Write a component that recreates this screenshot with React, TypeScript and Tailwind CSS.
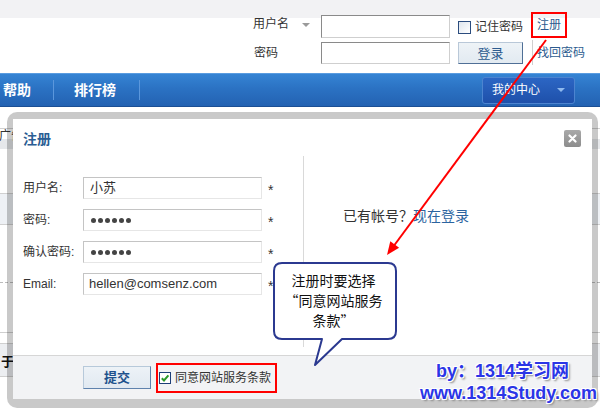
import React from "react";

// Login header + nav, with the register dialog opened on top of the page.
const font = "[font-family:'Liberation_Sans','Noto_Sans_CJK_SC',sans-serif]";

const Dots: React.FC = () => (
  <div className="flex items-center gap-[2px] pl-[7px]">
    {[0, 1, 2, 3, 4, 5].map((i) => (
      <span key={i} className="block w-[5px] h-[5px] rounded-full bg-[#444]" />
    ))}
  </div>
);

const Field: React.FC<{ label: string; children?: React.ReactNode }> = ({ label, children }) => (
  <div className="flex items-center h-[22px]">
    <span className="w-[60px]">{label}</span>
    <div className="w-[179px] h-[22px] flex items-center border border-[#c4c4c4] border-r-[#e6e6e6] border-b-[#e6e6e6] bg-white text-[13px] text-[#333]">
      {children}
    </div>
    <span className="ml-[6px] pt-[4px] text-[14px] leading-none">*</span>
  </div>
);

const App: React.FC = () => {
  return (
    <div className={`relative w-[600px] h-[408px] overflow-hidden bg-white text-[12px] text-[#333] ${font}`}>
      {/* top login bar */}
      <header className="h-[73px] bg-[linear-gradient(#f2f2f4_18px,#fff_18px)] pl-[253px] pt-[12px]">
        <div className="flex items-start h-[26px]">
          <span className="w-[49px] mt-[4px] leading-[16px]">用户名</span>
          <span className="w-[19px] mt-[11px]">
            <span className="block w-0 h-0 border-x-[4px] border-x-transparent border-t-[4px] border-t-[#9a9a9a]" />
          </span>
          <div className="w-[129px] h-[23px] mt-[3px] border border-[#8a8a8a] border-r-[#cfcfcf] border-b-[#cfcfcf] bg-white" />
          <label className="ml-[8px] w-[73px] flex items-center mt-[7px]">
            <span className="block w-[13px] h-[13px] border border-[#2b4c7e] bg-[linear-gradient(135deg,#dfe6ee,#fff)]" />
            <span className="ml-[4px] leading-[16px]">记住密码</span>
          </label>
          <a className="w-[36px] h-[26px] border-2 border-[#ff0000] flex items-center justify-center text-[#2c5b8f]">注册</a>
        </div>
        <div className="flex items-start mt-[4px] h-[22px]">
          <span className="w-[68px] pl-[1px] leading-[22px]">密码</span>
          <div className="w-[129px] h-[22px] border border-[#8a8a8a] border-r-[#cfcfcf] border-b-[#cfcfcf] bg-white" />
          <button className="ml-[8px] w-[65px] h-[22px] border border-[#b9c8d8] border-r-[#4f6f96] border-b-[#4f6f96] bg-[linear-gradient(#eef3f7,#e2eaf1)] text-[13px] text-[#2c5b8f] leading-none">
            登录
          </button>
          <span className="ml-[9px] -mt-[2px] w-px h-[25px] bg-[#cfcfcf]" />
          <a className="ml-[4px] leading-[22px] text-[#2c5b8f]">找回密码</a>
        </div>
      </header>

      {/* nav */}
      <nav className="h-[34px] flex items-center bg-[linear-gradient(#3584d4,#2b72c3_45%,#2362b2)] border-t border-[#5a9ce0] border-b border-b-[#1b4f94] text-white">
        <span className="w-[53px] pl-[3px] text-[14px] font-bold">帮助</span>
        <span className="w-px h-[20px] bg-[#5b97dc]" />
        <span className="w-[85px] pl-[20px] text-[14px] font-bold">排行榜</span>
        <span className="w-px h-[20px] bg-[#5b97dc]" />
        <div className="ml-auto mr-[25px] w-[93px] h-[27px] flex items-center justify-between pl-[9px] pr-[9px] rounded-[3px] border border-[#4c84d0] bg-[linear-gradient(#2c66c4,#1e50aa)]">
          <span className="text-[12px]">我的中心</span>
          <span className="block w-0 h-0 border-x-[4px] border-x-transparent border-t-[4px] border-t-[#8fb9ee]" />
        </div>
      </nav>

      {/* page content beneath the dialog */}
      <div className="flex flex-col">
        <div className="h-[21px]" />
        <div className="h-[21px] border-t border-[#d0d0d0] bg-[linear-gradient(#fff_10px,#e6e8eb_10px)] -ml-[1px] leading-[14px] text-[12px] text-[#333]">广告</div>
        <div className="h-[44px]" />
        <div className="h-[32px] border-y border-[#d0d0d0] bg-[#eef1f5]" />
        <div className="h-[58px] border-b border-dashed border-[#bbb]" />
        <div className="h-[49px]" />
        <div className="h-[11px] border-t border-[#cfcfcf]" />
        <div className="h-[34px] border-y border-[#cfcfcf] bg-[#eceef1] pl-[1px] pt-[8px] text-[13px] font-bold text-[#111]">于</div>
      </div>

      {/* register dialog */}
      <div className="absolute left-[7px] top-[112px] w-[591px] h-[296px] rounded-[10px] bg-[rgba(0,0,0,0.21)] pt-[7px] px-[6px] pb-[9px]">
        <div className="h-full bg-white flex flex-col">
          <div className="h-[37px] flex items-start justify-between">
            <h2 className="pl-[10px] pt-[10px] leading-[20px] text-[14px] font-bold text-[#2b5d93]">注册</h2>
            <button className="mt-[11px] mr-[11px] w-[17px] h-[17px] rounded-[2px] bg-[linear-gradient(#a9a9a9,#8c8c8c)] flex items-center justify-center">
              <svg width="9" height="9" viewBox="0 0 9 9">
                <path d="M1.5 1.5 L7.5 7.5 M7.5 1.5 L1.5 7.5" stroke="#fff" strokeWidth="2.2" strokeLinecap="round" />
              </svg>
            </button>
          </div>
          <div className="flex flex-1">
            <div className="w-[291px] mb-[8px] border-r border-[#d9d9d9] pl-[10px] pt-[21px] flex flex-col gap-[10px]">
              <Field label="用户名:">
                <span className="pl-[6px]">小苏</span>
              </Field>
              <Field label="密码:">
                <Dots />
              </Field>
              <Field label="确认密码:">
                <Dots />
              </Field>
              <Field label="Email:">
                <span className="pl-[5px]">hellen@comsenz.com</span>
              </Field>
            </div>
            <div className="flex-1 pl-[39px] pt-[50px] leading-[20px] text-[14px] text-[#333]">
              已有帐号？<a className="text-[#2b64a0]">现在登录</a>
            </div>
          </div>
          <div className="h-[44px] border-t border-[#d6d6d6] bg-[#f2f3f5] flex items-center pl-[70px]">
            <button className="w-[68px] h-[23px] border border-[#b7c9da] border-r-[#5e82ad] border-b-[#5e82ad] bg-[linear-gradient(#edf2f7,#e1e9f1)] text-[13px] font-bold text-[#1f528d] leading-none">
              提交
            </button>
            <div className="ml-[5px] w-[121px] h-[30px] border-2 border-[#ff0000] flex items-center pl-[1px]">
              <span className="w-[12px] h-[12px] border border-[#1d3f78] bg-white flex items-center justify-center">
                <svg width="10" height="10" viewBox="0 0 10 10">
                  <path d="M1.8 5.2 L4 7.5 L8.4 2.4" stroke="#2a9a2a" strokeWidth="2" fill="none" />
                </svg>
              </span>
              <span className="ml-[4px] text-[12px] text-[#333]">同意网站服务条款</span>
            </div>
          </div>
        </div>
      </div>

      {/* callout balloon */}
      <div className="absolute left-[272px] top-[261px] w-[127px] h-[106px]">
        <svg className="absolute inset-0" width="127" height="106" viewBox="0 0 127 106">
          <path
            d="M10 2 H116 Q124 2 124 10 V70 Q124 78 116 78 H70 L43 104 L50 78 H10 Q2 78 2 70 V10 Q2 2 10 2 Z"
            fill="#fff"
            stroke="#2b3990"
            strokeWidth="2"
            strokeLinejoin="round"
          />
        </svg>
        <div className="relative pt-[9px] pl-[2px] pr-[6px] text-center text-[14px] leading-[20px] text-[#111] [font-family:'Noto_Sans_CJK_SC',sans-serif]">
          <div>注册时要选择</div>
          <div>
            <span className="inline-block w-[14px] text-right">“</span>同意网站服务
          </div>
          <div>
            条款<span className="inline-block w-[14px] text-left">”</span>
          </div>
        </div>
      </div>

      {/* red arrow */}
      <svg className="absolute inset-0 pointer-events-none" width="600" height="408" viewBox="0 0 600 408">
        <line x1="546" y1="40" x2="393" y2="247" stroke="#ff0000" strokeWidth="2" />
        <polygon points="387,255 390.3,241.3 399.1,247.8" fill="#ff0000" />
      </svg>

      {/* watermark */}
      <div className="absolute left-[420px] top-[360px] leading-[22px] text-[18px] font-bold text-[#2b35e6] [text-shadow:1px_1px_0_#fff,-1px_-1px_0_#fff,1px_-1px_0_#fff,-1px_1px_0_#fff,2px_2px_2px_#8a8a8a]">
        <div className="pl-[16px]">by：1314学习网</div>
        <div>www.1314Study.com</div>
      </div>
    </div>
  );
};

export default App;
